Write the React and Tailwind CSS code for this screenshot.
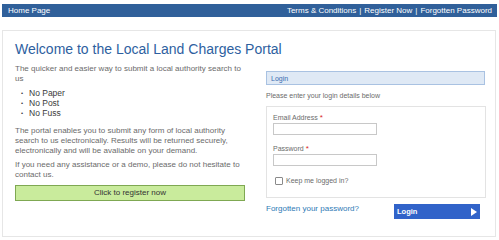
import React from 'react';

export default function App() {
  return (
    <div className="w-[499px] h-[240px] bg-white px-[2px] pt-[4px] font-['Liberation_Sans',Arial,sans-serif] overflow-hidden">
      {/* Top nav */}
      <div className="h-[13px] bg-[#30609a] flex items-center justify-between pl-[6px] pr-[5px] text-[8px] text-white leading-none">
        <span>Home Page</span>
        <span className="flex items-center gap-[3px]">
          <span>Terms &amp; Conditions</span>
          <span>|</span>
          <span>Register Now</span>
          <span>|</span>
          <span>Forgotten Password</span>
        </span>
      </div>

      {/* Main panel */}
      <div className="mt-[13px] w-[494px] h-[207px] border border-[#e6e6e6] pl-[12px] pr-[9px] pt-[9px]">
        <h1 className="text-[14px] leading-[18px] text-[#2e5f9f] font-normal">
          Welcome to the Local Land Charges Portal
        </h1>

        <div className="grid grid-cols-[230px_220px] gap-x-[21px]">
          {/* Left column */}
          <div className="text-[8px] leading-[10px] text-[#6b6b6b]">
            <p className="mt-[6px]">
              The quicker and easier way to submit a local authority search to us
            </p>
            <ul className="mt-[4px] text-[8.5px] text-[#3a3a3a]">
              {['No Paper', 'No Post', 'No Fuss'].map((item) => (
                <li key={item} className="flex items-center h-[10px]">
                  <span className="w-[14px] pl-[6px] text-[6px]">•</span>
                  {item}
                </li>
              ))}
            </ul>
            <p className="mt-[8px] pr-[8px]">
              The portal enables you to submit any form of local authority search to us
              electronically. Results will be returned securely, electronically and will be
              avaliable on your demand.
            </p>
            <p className="mt-[4px]">
              If you need any assistance or a demo, please do not hesitate to contact us.
            </p>
            <button className="mt-[5px] w-full h-[16px] bg-[#c9eb9c] border border-[#7fa852] text-[8px] leading-none text-[#333333] flex items-center justify-center">
              Click to register now
            </button>
          </div>

          {/* Right column */}
          <div className="pt-[13px]">
            <div className="h-[14px] w-[219px] bg-[#dfe9f5] border border-[#a9c2e2] flex items-center px-[4px] text-[7px] leading-none text-[#3b6bb0]">
              Login
            </div>
            <p className="mt-[6px] text-[7px] leading-[10px] text-[#6b6b6b]">
              Please enter your login details below
            </p>

            <div className="mt-[5px] h-[92px] border border-[#e3e3e3] pl-[6px] pt-[6px] text-[7px] leading-[10px] text-[#6b6b6b]">
              <label className="block">
                Email Address <span className="text-[#d9262b] text-[8px]">*</span>
              </label>
              <input className="block w-[104px] h-[12px] border border-[#c8c8c8] bg-white" />

              <label className="block mt-[9px]">
                Password <span className="text-[#d9262b] text-[8px]">*</span>
              </label>
              <input type="password" className="block w-[104px] h-[12px] border border-[#c8c8c8] bg-white" />

              <div className="mt-[10px] flex items-center h-[10px] pl-[2px]">
                <span className="w-[8px] h-[8px] border border-[#8a8a8a] bg-white rounded-[1px]"></span>
                <span className="ml-[3px]">Keep me logged in?</span>
              </div>
            </div>

            <div className="mt-[6px] flex items-start justify-between pr-[6px]">
              <a className="text-[8px] leading-[10px] text-[#2f7ab5]">Forgotten your password?</a>
              <button className="w-[86px] h-[15px] bg-[#3163c9] flex items-center justify-between pl-[3px] pr-[3px] text-white text-[7.5px] font-bold leading-none">
                <span>Login</span>
                <svg width="6" height="8" viewBox="0 0 6 8">
                  <path d="M0 0 L6 4 L0 8 Z" fill="#ffffff" />
                </svg>
              </button>
            </div>
          </div>
        </div>
      </div>
    </div>
  );
}
